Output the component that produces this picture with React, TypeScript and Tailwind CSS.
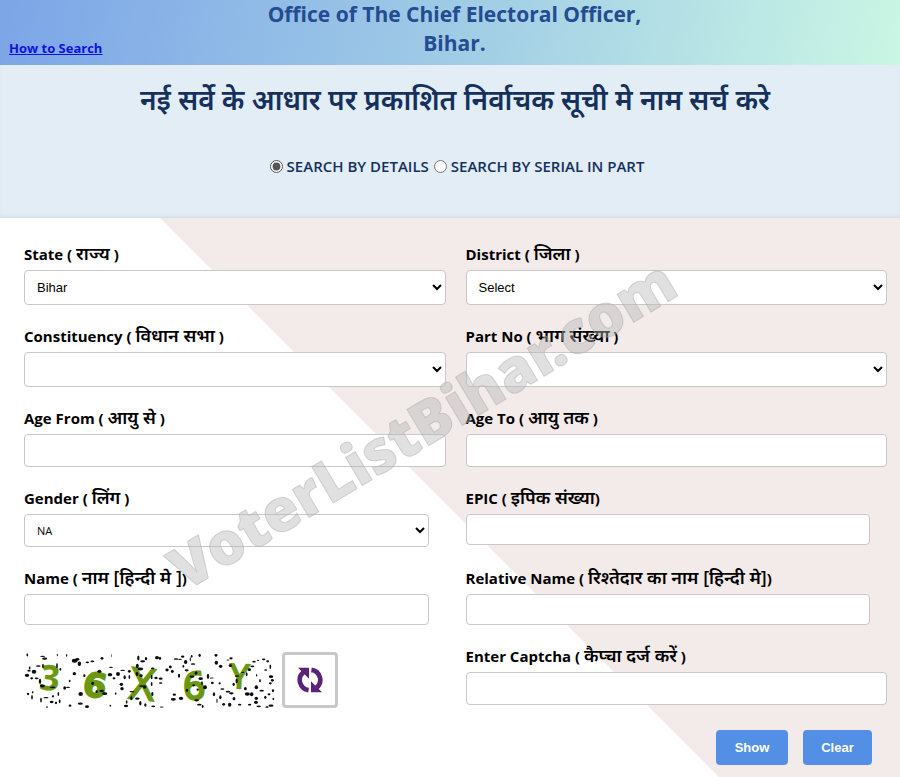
import type { ReactNode } from "react";

type FieldProps = {
  id: string;
  label: string;
  hindi: string;
  end?: string;
  children: ReactNode;
};

const inputClass = "block rounded border border-[#c8c8c8] bg-white px-3 text-[13px]";
const selectClass =
  "block rounded border border-[#c8c8c8] bg-white px-2 font-['Liberation_Sans',Arial,sans-serif] text-[13px]";

function Field({ id, label, hindi, end = " )", children }: FieldProps) {
  return (
    <div>
      <label htmlFor={id} className="mb-1 block h-6 text-[15px] font-bold leading-6">
        {label} ( <span className="text-[18px] font-semibold leading-none">{hindi}</span>
        {end}
      </label>
      {children}
    </div>
  );
}

// x, y, rx, ry of each noise speck
const specks = [
  [82, 54, 3, 5], [128, 58, 9, 2], [134, 65, 9, 4], [172, 54, 2, 4], [200, 55, 2, 6],
  [224, 71, 10, 7], [232, 67, 7, 5], [238, 80, 6, 8], [277, 73, 7, 3], [262, 76, 6, 3],
  [306, 64, 5, 5], [334, 56, 1, 6], [171, 86, 3, 9], [181, 97, 3, 5], [115, 87, 8, 3],
  [89, 93, 3, 5], [102, 104, 8, 7], [81, 115, 8, 6], [95, 124, 5, 4], [87, 101, 6, 3],
  [129, 87, 3, 8], [120, 133, 4, 10], [127, 147, 9, 5], [110, 124, 7, 3], [223, 110, 6, 6],
  [209, 132, 3, 4], [194, 153, 5, 6], [204, 151, 8, 2], [158, 151, 10, 3], [84, 171, 4, 4],
  [96, 181, 3, 8], [98, 166, 3, 4], [123, 189, 3, 9], [138, 182, 9, 2], [159, 178, 4, 4],
  [175, 171, 3, 7], [155, 195, 7, 4], [141, 210, 3, 3], [168, 198, 4, 4], [179, 193, 3, 7],
  [210, 206, 5, 4], [242, 171, 8, 7], [241, 200, 9, 4], [261, 209, 7, 5], [253, 116, 4, 5],
  [298, 103, 7, 6], [278, 139, 5, 6], [330, 113, 8, 6], [342, 124, 5, 4], [354, 111, 7, 7],
  [368, 100, 9, 2], [374, 121, 4, 7], [388, 103, 5, 5], [388, 120, 3, 7], [333, 91, 7, 2],
  [364, 142, 6, 6], [366, 155, 6, 6], [290, 164, 4, 5], [314, 170, 9, 5], [305, 162, 8, 4],
  [347, 170, 3, 4], [378, 207, 8, 4], [380, 195, 3, 6], [394, 184, 4, 7], [331, 206, 3, 3],
  [415, 63, 4, 9], [428, 73, 9, 4], [438, 65, 4, 6], [412, 87, 5, 8], [421, 96, 10, 5],
  [411, 111, 5, 7], [423, 116, 6, 5], [471, 62, 7, 6], [480, 64, 4, 6], [458, 94, 6, 3],
  [455, 120, 3, 8], [468, 123, 6, 4], [482, 125, 7, 4], [482, 138, 6, 3], [455, 141, 3, 7],
  [434, 150, 6, 6], [425, 147, 9, 3], [412, 185, 8, 4], [421, 199, 4, 8], [436, 204, 4, 6],
  [457, 171, 4, 7], [460, 208, 7, 3], [485, 210, 7, 2], [396, 164, 9, 2], [501, 99, 6, 5],
  [511, 90, 5, 5], [517, 103, 5, 6], [528, 66, 8, 3], [540, 67, 7, 2], [548, 59, 6, 4],
  [557, 75, 6, 7], [571, 67, 2, 7], [575, 58, 3, 5], [599, 55, 4, 6], [579, 81, 8, 3],
  [550, 88, 3, 5], [560, 100, 7, 4], [537, 116, 4, 7], [576, 119, 9, 4], [588, 108, 5, 6],
  [602, 125, 8, 5], [624, 118, 4, 9], [635, 123, 7, 2], [648, 55, 5, 5], [649, 77, 6, 7],
  [662, 88, 6, 6], [693, 64, 6, 4], [684, 69, 5, 2], [691, 86, 6, 5], [523, 173, 6, 4],
  [520, 187, 9, 5], [543, 184, 8, 6], [561, 160, 4, 6], [581, 145, 5, 4], [593, 158, 4, 4],
  [615, 151, 7, 7], [606, 139, 3, 7], [590, 190, 8, 4], [608, 208, 3, 6], [598, 203, 8, 3],
  [637, 138, 5, 4], [659, 139, 4, 4], [667, 156, 7, 3], [642, 172, 4, 7], [661, 181, 4, 7],
  [684, 164, 8, 3], [694, 169, 8, 4], [702, 185, 5, 6], [689, 203, 6, 7], [671, 202, 5, 5],
  [651, 191, 2, 8], [710, 132, 4, 9], [701, 142, 4, 6], [711, 117, 8, 3], [719, 203, 6, 3],
  [736, 155, 5, 6], [742, 171, 9, 6], [755, 172, 6, 7], [769, 151, 6, 7], [785, 161, 8, 3],
  [769, 184, 6, 6], [768, 196, 7, 6], [749, 203, 6, 3], [748, 98, 6, 5], [757, 88, 7, 3],
  [762, 74, 6, 3], [774, 70, 4, 2], [791, 67, 6, 3], [803, 73, 5, 4], [811, 89, 3, 8],
  [797, 99, 5, 3], [813, 119, 8, 5], [817, 130, 5, 5], [811, 139, 5, 4], [780, 131, 3, 6],
  [770, 115, 2, 5], [796, 181, 4, 6], [807, 172, 5, 4], [819, 161, 4, 5], [820, 186, 3, 4],
  [813, 206, 9, 4], [801, 210, 6, 3], [776, 208, 8, 3], [740, 112, 3, 7], [728, 106, 6, 2],
];

function CaptchaImage() {
  return (
    <svg
      viewBox="72 45 756 171"
      className="h-[57px] w-[252px] overflow-visible"
      role="img"
      aria-label="Captcha"
      fontFamily="'Open Sans', sans-serif"
      fontWeight="bold"
      fill="#6b980e"
      stroke="#6b980e"
    >
      <text x="120" y="159" fontSize="104" strokeWidth="1" transform="rotate(6 150 125)">3</text>
      <text x="250" y="180" fontSize="100" strokeWidth="6" fontFamily="'DejaVu Sans', sans-serif" transform="rotate(10 287 145)">6</text>
      <text x="389" y="188" fontSize="132" fontWeight="normal" strokeWidth="5" transform="rotate(6 428 145)">X</text>
      <text x="550" y="186" fontSize="112" fontWeight="normal" strokeWidth="8" transform="rotate(-4 584 147)">6</text>
      <text x="690" y="154" fontSize="100" fontWeight="normal" strokeWidth="6" transform="rotate(3 724 120)">Y</text>
      <g fill="#0b0b0b" stroke="none">
        {specks.map(([x, y, rx, ry]) => (
          <ellipse key={`${x}-${y}`} cx={x} cy={y} rx={rx * 0.85} ry={ry * 0.85} />
        ))}
      </g>
    </svg>
  );
}

function RefreshIcon() {
  return (
    <svg viewBox="0 0 26 26" className="size-[26px]" fill="#5c2277" aria-hidden="true">
      <path d="M1 .7H12V11.7Z" />
      <path d="M11.6 23.1A10.2 10.2 0 0 1 6.4 5.2" fill="none" stroke="#5c2277" strokeWidth="4.6" />
      <path d="M25 25.3H14V14.3Z" />
      <path d="M14.4 2.9A10.2 10.2 0 0 1 19.6 20.8" fill="none" stroke="#5c2277" strokeWidth="4.6" />
    </svg>
  );
}

function Watermark() {
  return (
    <svg
      viewBox="0 0 520 350"
      className="pointer-events-none absolute left-[160px] top-[42px] w-[520px] overflow-visible"
      aria-hidden="true"
    >
      <text
        x="25"
        y="332"
        transform="rotate(-31 25 332)"
        fontFamily="'Noto Sans', sans-serif"
        fontWeight="900"
        fontSize="59"
        fill="#b4b4b4"
        fillOpacity="0.42"
        stroke="#a8a8a8"
        strokeOpacity="0.45"
        strokeWidth="1"
      >
        VoterListBihar.com
      </text>
    </svg>
  );
}

export default function App() {
  return (
    <div className="font-['Open_Sans','Noto_Sans',sans-serif] text-black">
      <header className="grid grid-cols-[1fr_400px_1fr] bg-[linear-gradient(100deg,#7ca5e7,#9fcbe6_50%,#caf6e4)] pb-[7px] pl-[9px]">
        <a href="#help" className="self-end text-[13px] font-bold leading-5 text-[#1111dd] underline">
          How to Search
        </a>
        <h1 className="text-center text-[21px] font-bold leading-[29px] text-[#244c91]">
          Office of The Chief Electoral Officer, Bihar.
        </h1>
      </header>

      <section className="flex flex-col items-center bg-[#e2edf5] pb-10 pl-[10px] pt-3 text-[#15305c] shadow-[inset_0_-4px_5px_-3px_#ccdcdf]">
        <h2 className="text-[28px] font-semibold leading-[44px]">
          नई सर्वे के आधार पर प्रकाशित निर्वाचक सूची मे नाम सर्च करे
        </h2>
        <div className="mt-[34px] flex items-center gap-[5px] pl-1 text-[15px] font-semibold leading-[23px]">
          <label className="flex items-center gap-1">
            <input type="radio" name="mode" defaultChecked className="size-[13px] accent-[#555]" />
            SEARCH BY DETAILS
          </label>
          <label className="flex items-center gap-1">
            <input type="radio" name="mode" className="size-[13px] accent-[#555]" />
            SEARCH BY SERIAL IN PART
          </label>
        </div>
      </section>

      <form className="relative bg-[linear-gradient(45deg,#fff_calc(50%-8px),#f3eaea_calc(50%-7px))] pb-3 pl-6 pr-[13px] pt-6">
        <div className="grid grid-cols-2 gap-x-5 gap-y-[19px]">
          <Field id="state" label="State" hindi="राज्य">
            <select id="state" className={`${selectClass} h-[35px] w-full`}>
              <option>Bihar</option>
            </select>
          </Field>
          <Field id="district" label="District" hindi="जिला">
            <select id="district" className={`${selectClass} h-[35px] w-full`}>
              <option>Select</option>
            </select>
          </Field>
          <Field id="constituency" label="Constituency" hindi="विधान सभा">
            <select id="constituency" className={`${selectClass} h-[35px] w-full`} />
          </Field>
          <Field id="part" label="Part No" hindi="भाग संख्या">
            <select id="part" className={`${selectClass} h-[35px] w-full`} />
          </Field>
          <Field id="age-from" label="Age From" hindi="आयु से">
            <input id="age-from" className={`${inputClass} h-[33px] w-full`} />
          </Field>
          <Field id="age-to" label="Age To" hindi="आयु तक">
            <input id="age-to" className={`${inputClass} h-[33px] w-full`} />
          </Field>
          <Field id="gender" label="Gender" hindi="लिंग">
            <select
              id="gender"
              className="block h-[33px] w-[96%] rounded border border-[#c8c8c8] bg-white px-2 text-[11px]"
            >
              <option>NA</option>
            </select>
          </Field>
          <Field id="epic" label="EPIC" hindi="इपिक संख्या" end=")">
            <input id="epic" className={`${inputClass} h-[31px] w-[96%]`} />
          </Field>
          <Field id="name" label="Name" hindi="नाम [हिन्दी मे ]" end=")">
            <input id="name" className={`${inputClass} h-[31px] w-[96%]`} />
          </Field>
          <Field id="relative" label="Relative Name" hindi="रिश्तेदार का नाम [हिन्दी मे]" end=")">
            <input id="relative" className={`${inputClass} h-[31px] w-[96%]`} />
          </Field>
          <div className="flex items-start gap-[6px] pt-2">
            <CaptchaImage />
            <button
              type="button"
              aria-label="Refresh captcha"
              className="flex size-14 items-center justify-center rounded border-3 border-[#c8c8c8] bg-white"
            >
              <RefreshIcon />
            </button>
          </div>
          <Field id="captcha" label="Enter Captcha" hindi="कैप्चा दर्ज करें">
            <input id="captcha" className={`${inputClass} h-[33px] w-full`} />
          </Field>
        </div>

        <div className="mt-[21px] flex justify-end gap-[15px] pr-[15px] font-['Liberation_Sans',Arial,sans-serif] text-[13px] font-bold text-white">
          <button type="submit" className="h-[35px] w-[72px] rounded bg-[#5390e5]">
            Show
          </button>
          <button type="reset" className="h-[35px] w-[69px] rounded bg-[#5390e5]">
            Clear
          </button>
        </div>

        <Watermark />
      </form>
    </div>
  );
}
